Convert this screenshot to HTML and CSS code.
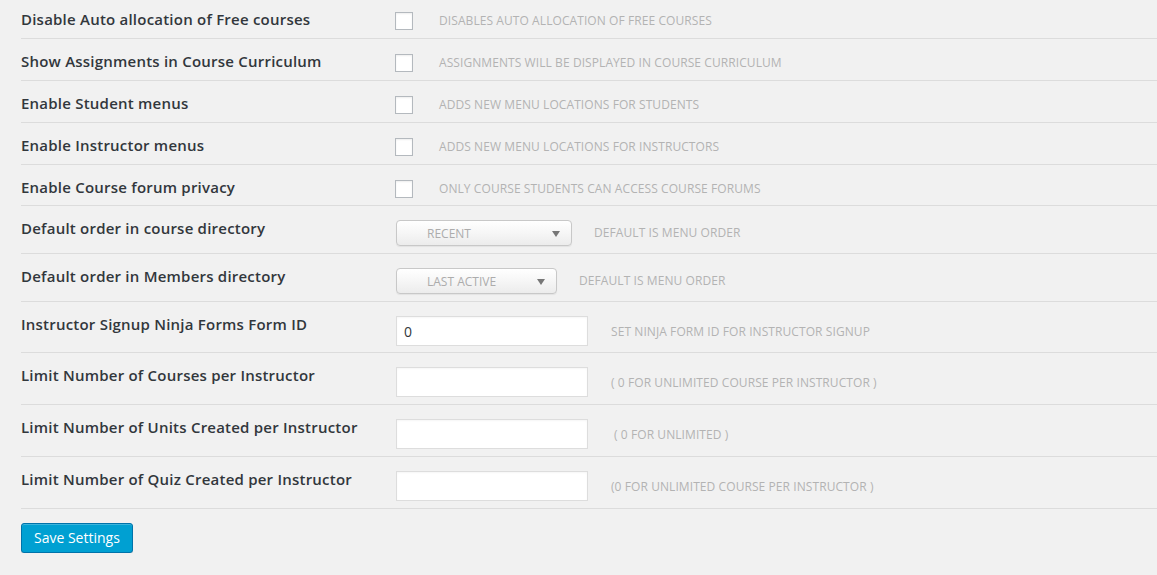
FILE: index.html
```html
<!DOCTYPE html>
<html>
<head>
<meta charset="utf-8">
<link rel="stylesheet" href="styles.css">
</head>
<body>
<div class="settings">
  <div class="row row-check">
    <div class="label">Disable Auto allocation of Free courses</div>
    <div class="field"><span class="checkbox"></span><span class="desc desc-check">Disables auto allocation of free courses</span></div>
  </div>
  <div class="row row-check">
    <div class="label">Show Assignments in Course Curriculum</div>
    <div class="field"><span class="checkbox"></span><span class="desc desc-check">Assignments will be displayed in course curriculum</span></div>
  </div>
  <div class="row row-check">
    <div class="label">Enable Student menus</div>
    <div class="field"><span class="checkbox"></span><span class="desc desc-check">Adds new menu locations for students</span></div>
  </div>
  <div class="row row-check">
    <div class="label">Enable Instructor menus</div>
    <div class="field"><span class="checkbox"></span><span class="desc desc-check">Adds new menu locations for instructors</span></div>
  </div>
  <div class="row row-check row-check-last">
    <div class="label">Enable Course forum privacy</div>
    <div class="field"><span class="checkbox"></span><span class="desc desc-check">Only course students can access course forums</span></div>
  </div>
  <div class="row row-select">
    <div class="label">Default order in course directory</div>
    <div class="field"><span class="select select-wide">Recent<span class="arrow"></span></span><span class="desc desc-select">Default is menu order</span></div>
  </div>
  <div class="row row-select">
    <div class="label">Default order in Members directory</div>
    <div class="field"><span class="select select-narrow">Last Active<span class="arrow"></span></span><span class="desc desc-select">Default is menu order</span></div>
  </div>
  <div class="row row-text row-text-first">
    <div class="label">Instructor Signup Ninja Forms Form ID</div>
    <div class="field"><span class="input">0</span><span class="desc desc-text">Set Ninja form ID for instructor signup</span></div>
  </div>
  <div class="row row-text">
    <div class="label">Limit Number of Courses per Instructor</div>
    <div class="field"><span class="input"></span><span class="desc desc-text">( 0 for unlimited course per instructor )</span></div>
  </div>
  <div class="row row-text">
    <div class="label">Limit Number of Units Created per Instructor</div>
    <div class="field"><span class="input"></span><span class="desc desc-text desc-shift">( 0 for unlimited )</span></div>
  </div>
  <div class="row row-text">
    <div class="label">Limit Number of Quiz Created per Instructor</div>
    <div class="field"><span class="input"></span><span class="desc desc-text">(0 for unlimited course per instructor )</span></div>
  </div>
  <div class="actions">
    <button class="button-primary">Save Settings</button>
  </div>
</div>
</body>
</html>
```

FILE: styles.css
```css
html, body {
  margin: 0;
  padding: 0;
  background: #f1f1f1;
  overflow: hidden;
}

body {
  font-family: "Open Sans", "Liberation Sans", sans-serif;
  color: #23282d;
  font-size: 14px;
}

.settings {
  margin-top: -3px;
  padding-left: 21px;
}

.row {
  display: flex;
  align-items: flex-start;
  border-bottom: 1px solid #dcdcdc;
  box-sizing: border-box;
}

.row-check { height: 42px; }
.row-check-last { height: 41px; }
.row-select { height: 48px; }
.row-text { height: 52px; }
.row-text-first { height: 51px; }

.label {
  width: 374px;
  flex: none;
  padding-top: 12px;
  line-height: 20px;
  font-weight: 600;
  font-size: 15px;
  letter-spacing: 0.22px;
  color: #32373c;
  white-space: nowrap;
}

.field {
  display: flex;
  align-items: center;
  margin-top: 14px;
}

.checkbox {
  width: 18px;
  height: 18px;
  box-sizing: border-box;
  border: 1px solid #b4b9be;
  background: #fff;
  box-shadow: inset 0 1px 2px rgba(0,0,0,0.07);
  flex: none;
}

.desc {
  text-transform: uppercase;
  font-size: 12px;
  letter-spacing: 0.08px;
  line-height: 18px;
  color: #b3b3b3;
  white-space: nowrap;
}

.desc-check { margin-left: 26px; margin-top: 1px; }
.desc-select { margin-left: 22px; }
.desc-text { margin-left: 23px; margin-top: 1px; }
.desc-shift { margin-left: 26px; }

.select {
  position: relative;
  display: flex;
  align-items: center;
  height: 26px;
  box-sizing: border-box;
  margin-left: 1px;
  padding-left: 30px;
  border: 1px solid #c8c8c8;
  border-radius: 4px;
  background: linear-gradient(#ffffff 0%, #f6f6f6 50%, #ececec 100%);
  box-shadow: 0 1px 1px rgba(0,0,0,0.06);
  text-transform: uppercase;
  font-size: 12px;
  color: #acacac;
}

.select-wide { width: 176px; }
.select-narrow { width: 161px; }

.arrow {
  position: absolute;
  right: 11px;
  top: 10px;
  width: 0;
  height: 0;
  border-left: 4px solid transparent;
  border-right: 4px solid transparent;
  border-top: 6px solid #777;
}

.input {
  display: flex;
  align-items: center;
  width: 192px;
  height: 30px;
  box-sizing: border-box;
  margin-left: 1px;
  padding-left: 7px;
  border: 1px solid #dddddd;
  background: #fff;
  box-shadow: inset 0 1px 2px rgba(0,0,0,0.04);
  font-size: 14px;
  color: #32373c;
}

.actions {
  padding-top: 14px;
}

.button-primary {
  display: block;
  width: 112px;
  height: 30px;
  box-sizing: border-box;
  padding: 0 12px;
  border: 1px solid #0073aa;
  border-radius: 3px;
  background: #00a0d2;
  box-shadow: inset 0 1px 0 rgba(120,200,230,0.5), 0 1px 0 rgba(0,0,0,0.15);
  color: #fff;
  font-family: "Open Sans", "Liberation Sans", sans-serif;
  font-size: 14px;
  line-height: 28px;
  text-align: left;
  white-space: nowrap;
}
```
